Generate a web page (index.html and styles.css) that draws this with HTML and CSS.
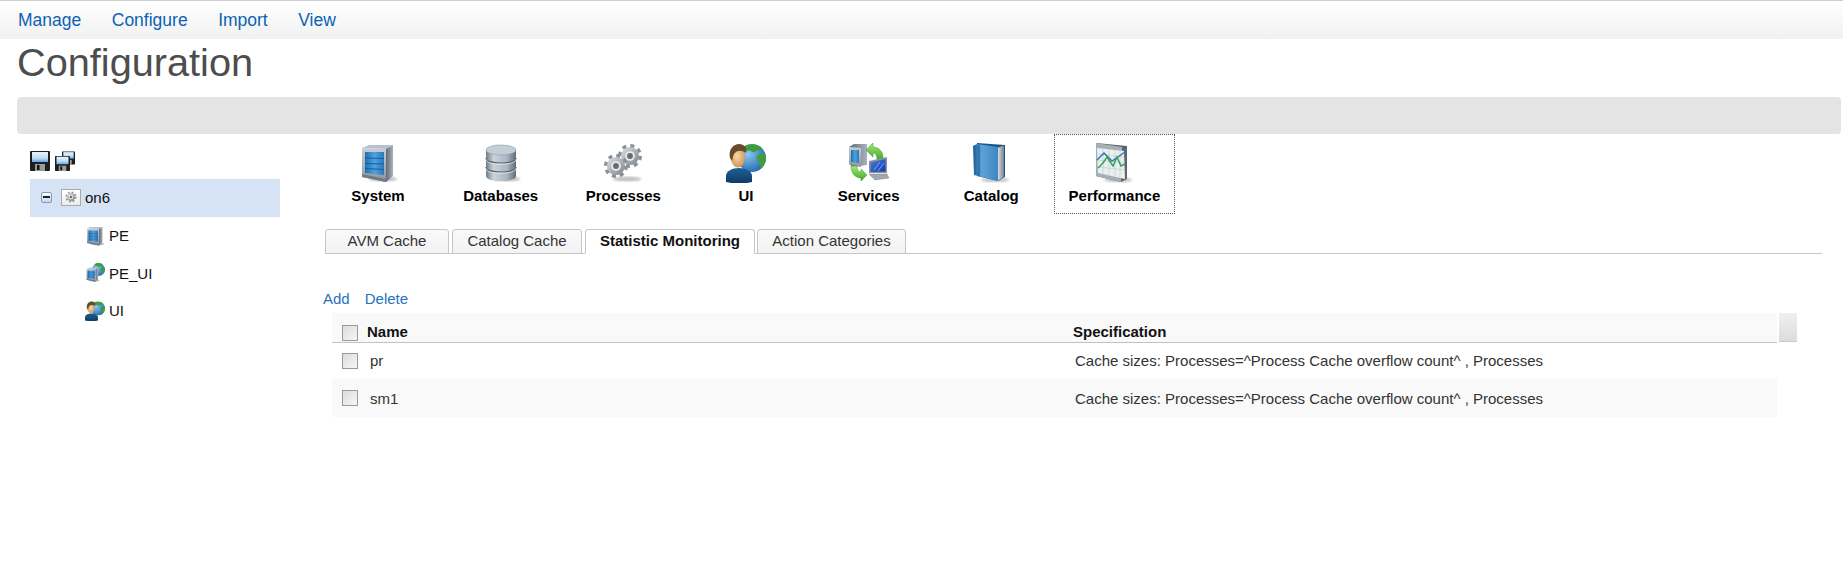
FILE: index.html
```html
<!DOCTYPE html>
<html lang="en">
<head>
<meta charset="utf-8">
<title>Configuration</title>
<link rel="stylesheet" href="styles.css">
</head>
<body>
<svg class="defs" width="0" height="0" aria-hidden="true">
  <defs>
    <linearGradient id="gBlue" x1="0" y1="0" x2="1" y2="0"><stop offset="0" stop-color="#1f6fb5"/><stop offset=".5" stop-color="#4ba3e0"/><stop offset="1" stop-color="#2a78ba"/></linearGradient>
    <linearGradient id="gFrame" x1="0" y1="0" x2="0" y2="1"><stop offset="0" stop-color="#c7ced6"/><stop offset="1" stop-color="#8d959d"/></linearGradient>
    <linearGradient id="gSide" x1="0" y1="0" x2="1" y2="0"><stop offset="0" stop-color="#5f6a78"/><stop offset="1" stop-color="#aab2bc"/></linearGradient>
    <linearGradient id="gDb" x1="0" y1="0" x2="1" y2="0"><stop offset="0" stop-color="#6f7d88"/><stop offset=".25" stop-color="#c9d3da"/><stop offset=".7" stop-color="#a9b6c0"/><stop offset="1" stop-color="#5f6d78"/></linearGradient>
    <linearGradient id="gGear" x1="0" y1="0" x2="1" y2="1"><stop offset="0" stop-color="#dfe2e5"/><stop offset="1" stop-color="#7d8389"/></linearGradient>
    <radialGradient id="gGlobe" cx=".35" cy=".35" r=".8"><stop offset="0" stop-color="#8cc8f2"/><stop offset="1" stop-color="#145fa8"/></radialGradient>
    <radialGradient id="gSkin" cx=".45" cy=".4" r=".7"><stop offset="0" stop-color="#fbd9a6"/><stop offset="1" stop-color="#c98b4e"/></radialGradient>
    <linearGradient id="gBody" x1="0" y1="0" x2="0" y2="1"><stop offset="0" stop-color="#1f5f94"/><stop offset="1" stop-color="#0d3a63"/></linearGradient>
    <linearGradient id="gBook" x1="0" y1="0" x2="1" y2="0"><stop offset="0" stop-color="#1d5f96"/><stop offset=".15" stop-color="#2c77b3"/><stop offset=".35" stop-color="#5fa3d6"/><stop offset="1" stop-color="#3f86c0"/></linearGradient>
    <linearGradient id="gPages" x1="0" y1="0" x2="1" y2="0"><stop offset="0" stop-color="#e8ecef"/><stop offset="1" stop-color="#77818a"/></linearGradient>
    <linearGradient id="gScreen" x1="0" y1="0" x2="1" y2="1"><stop offset="0" stop-color="#4a7fe0"/><stop offset="1" stop-color="#1538a8"/></linearGradient>
    <linearGradient id="gArrow" x1="0" y1="0" x2="0" y2="1"><stop offset="0" stop-color="#a5e878"/><stop offset="1" stop-color="#3fa82c"/></linearGradient>
    <linearGradient id="gDisk" x1="0" y1="0" x2="0" y2="1"><stop offset="0" stop-color="#e8f2fb"/><stop offset=".6" stop-color="#c0dcf4"/><stop offset="1" stop-color="#5fa6e4"/></linearGradient>
    <filter id="blur"><feGaussianBlur stdDeviation="1.2"/></filter>

    <symbol id="server" viewBox="0 0 40 40">
      <ellipse cx="25" cy="36" rx="14" ry="2.5" fill="#777" opacity=".45" filter="url(#blur)"/>
      <polygon points="4,5 11,2 35,2 28,6" fill="#b9c2cc"/>
      <polygon points="28,6 35,2 35,33 28,39" fill="url(#gSide)"/>
      <polygon points="4,5 28,6 28,39 4,34" fill="url(#gFrame)"/>
      <polygon points="7,9 26,9 26,32 7,30" fill="url(#gBlue)"/>
      <path d="M7 15 26 15.500M7 20.500 26 21M7 25.500 26 26.500" stroke="#16588f" stroke-width=".9" fill="none"/>
      <polygon points="4,34 28,39 28,36 4,31" fill="#727a83"/>
    </symbol>

    <symbol id="db" viewBox="0 0 40 40">
      <ellipse cx="26" cy="36" rx="13" ry="2.5" fill="#777" opacity=".45" filter="url(#blur)"/>
      <path d="M5 7V33C5 36 11 38 20 38S35 36 35 33V7Z" fill="url(#gDb)"/>
      <ellipse cx="20" cy="7" rx="15" ry="5" fill="#c4ced6" stroke="#8b97a2" stroke-width=".6"/>
      <path d="M5 15C5 18 11 20 20 20S35 18 35 15M5 24C5 27 11 29 20 29S35 27 35 24" fill="none" stroke="#56626d" stroke-width="1.2"/>
      <path d="M5 16.200C5 19.200 11 21.200 20 21.200S35 19.200 35 16.200M5 25.200C5 28.200 11 30.200 20 30.200S35 28.200 35 25.200" fill="none" stroke="#e6ecf0" stroke-width=".8"/>
    </symbol>

    <symbol id="gear1" viewBox="0 0 40 40">
      <circle cx="20" cy="20" r="15" fill="none" stroke="#8b9197" stroke-width="7" stroke-dasharray="5.890 5.890"/>
      <circle cx="20" cy="20" r="14" fill="url(#gGear)"/>
      <circle cx="20" cy="20" r="7.500" fill="#e8eaec"/>
      <circle cx="20" cy="20" r="4.500" fill="#666c72"/>
    </symbol>

    <symbol id="gears" viewBox="0 0 40 40">
      <ellipse cx="24" cy="36" rx="14" ry="2.5" fill="#777" opacity=".45" filter="url(#blur)"/>
      <use href="#gear1" x="14" y="0" width="26" height="26"/>
      <use href="#gear1" x="0" y="10" width="26" height="26"/>
    </symbol>

    <symbol id="globe" viewBox="0 0 40 40">
      <circle cx="20" cy="20" r="20" fill="url(#gGlobe)"/>
      <path d="M8 4C14 -1 26 -1 32 4 35 8 30 11 27 9 24 13 19 12 17 9 14 11 9 9 8 4Z" fill="#3f9e3a"/>
      <path d="M30 15C34 13 38 13 39.500 16 40.500 24 38 31 33 35 30 31 31 26 28 23 25 21 26 17 30 15Z" fill="#3f9e3a"/>
    </symbol>

    <symbol id="person" viewBox="0 0 40 40">
      <path d="M0 39V33C0 28 6 25 13 25S26 28 26 33V39C18 41 8 41 0 39Z" fill="url(#gBody)"/>
      <ellipse cx="12" cy="15" rx="7" ry="9.500" fill="url(#gSkin)"/>
      <path d="M4 15C2 6 8 1 13 1S22 5 20 10C16 7 11 7 9 10 7 11 7 15 6 18Z" fill="#6b4a2c"/>
    </symbol>

    <symbol id="ui" viewBox="0 0 40 40">
      <use href="#globe" x="12" y="1" width="28" height="28"/>
      <use href="#person"/>
    </symbol>

    <symbol id="peui" viewBox="0 0 40 40">
      <use href="#globe" x="14" y="0" width="26" height="26"/>
      <use href="#server" x="0" y="8" width="30" height="30"/>
    </symbol>

    <symbol id="services" viewBox="0 0 40 40">
      <polygon points="0,4 5,1 18,1 18,22 4,24 0,21" fill="url(#gSide)"/>
      <polygon points="0,4 12,5 12,24 0,21" fill="url(#gFrame)"/>
      <polygon points="2,7 10,7 10,20 2,19" fill="url(#gBlue)"/>
      <path d="M17 7 24 0V4C30 4 35 9 34 17H28C28 13 27 10 24 10V14Z" fill="url(#gArrow)" stroke="#3b9a2b" stroke-width=".5"/>
      <path d="M2 23H8C8 27 10 29 12 29V26L18 32 12 38V35C6 35 2 30 2 23Z" fill="url(#gArrow)" stroke="#3b9a2b" stroke-width=".5"/>
      <polygon points="20,18 38,14 38,30 20,30" fill="#8b939b"/>
      <polygon points="21.500,19.500 36.500,16 36.500,28.500 21.500,29" fill="url(#gScreen)"/>
      <path d="M25 27 31 19M29 28 35 20" stroke="#7ba6f0" stroke-width="1"/>
      <polygon points="20,31 38,31 40,35 26,37" fill="#a2a9b0" stroke="#6e757c" stroke-width=".4"/>
    </symbol>

    <symbol id="book" viewBox="0 0 40 40">
      <ellipse cx="24" cy="37" rx="14" ry="2" fill="#777" opacity=".45" filter="url(#blur)"/>
      <polygon points="6,0 34,2 34,34 27,38 6,33" fill="#1c5485"/>
      <polygon points="26,5 33,2.500 33,34 26,38" fill="url(#gPages)"/>
      <polygon points="2,3 6,1 27,4 27,38 3,32" fill="url(#gBook)"/>
      <path d="M8 3V33" stroke="#174f80" stroke-width="1" opacity=".7"/>
    </symbol>

    <symbol id="perf" viewBox="0 0 40 40">
      <ellipse cx="24" cy="37" rx="14" ry="2" fill="#777" opacity=".45" filter="url(#blur)"/>
      <polygon points="2,0 33,3 33,36 27,39 2,33" fill="#5b6670"/>
      <polygon points="2,0 28,4 27,39 2,33" fill="#a7aeb4"/>
      <polygon points="3,5 30,8 31,36 4,30" fill="#e9f1f0"/>
      <path d="M9 6V31M15 6V32M21 7V33M26 7V35M3 11 30 14M3 17 30 20M4 24 31 27" stroke="#b9c6c9" stroke-width=".6"/>
      <path d="M3 17 10 10 18 18 31 9" fill="none" stroke="#2f74c6" stroke-width="1.500"/>
      <path d="M4 25 9 20 13 14 19 23 23 14 27 23 31 21" fill="none" stroke="#3aa24a" stroke-width="1.500"/>
    </symbol>

    <symbol id="disk" viewBox="0 0 20 20">
      <path d="M1 0H19A1 1 0 0 1 20 1V19A1 1 0 0 1 19 20H1A1 1 0 0 1 0 19V1A1 1 0 0 1 1 0Z" fill="#1f1f1f"/>
      <rect x="2" y="1" width="16" height="10" fill="url(#gDisk)"/>
      <rect x="5" y="13" width="10" height="7" fill="#9a9a9a"/>
      <rect x="7" y="14" width="2.500" height="5" fill="#111"/>
    </symbol>
  </defs>
</svg>

<nav class="topbar">
  <a class="nav-link" href="#">Manage</a>
  <a class="nav-link" href="#">Configure</a>
  <a class="nav-link" href="#">Import</a>
  <a class="nav-link" href="#">View</a>
</nav>

<h1 class="page-title">Configuration</h1>
<div class="message-bar"></div>

<div class="layout">
  <aside class="sidebar">
    <div class="save-icons">
      <svg class="save-one"><use href="#disk"/></svg>
      <span class="save-all">
        <svg class="save-back"><use href="#disk"/></svg>
        <svg class="save-front"><use href="#disk"/></svg>
      </span>
    </div>
    <div class="tree-root">
      <span class="tree-toggle"><span class="tree-minus"></span></span>
      <span class="tree-box">
        <svg class="tree-gear"><use href="#gear1"/></svg>
      </span>
      <span>on6</span>
    </div>
    <div class="tree-item"><svg class="tree-icon"><use href="#server"/></svg><span>PE</span></div>
    <div class="tree-item"><svg class="tree-icon"><use href="#peui"/></svg><span>PE_UI</span></div>
    <div class="tree-item"><svg class="tree-icon"><use href="#ui"/></svg><span>UI</span></div>
  </aside>

  <main class="content">
    <div class="tools">
      <div class="tool"><svg class="tool-icon"><use href="#server"/></svg><span>System</span></div>
      <div class="tool"><svg class="tool-icon"><use href="#db"/></svg><span>Databases</span></div>
      <div class="tool"><svg class="tool-icon"><use href="#gears"/></svg><span>Processes</span></div>
      <div class="tool"><svg class="tool-icon"><use href="#ui"/></svg><span>UI</span></div>
      <div class="tool"><svg class="tool-icon"><use href="#services"/></svg><span>Services</span></div>
      <div class="tool"><svg class="tool-icon"><use href="#book"/></svg><span>Catalog</span></div>
      <div class="tool tool-active"><svg class="tool-icon"><use href="#perf"/></svg><span>Performance</span></div>
    </div>

    <div class="tabs">
      <div class="tab tab-avm">AVM Cache</div>
      <div class="tab tab-cat">Catalog Cache</div>
      <div class="tab tab-stat tab-active">Statistic Monitoring</div>
      <div class="tab tab-act">Action Categories</div>
    </div>

    <div class="actions">
      <a class="action" href="#">Add</a>
      <a class="action" href="#">Delete</a>
    </div>

    <div class="grid-wrap">
      <table class="grid">
        <colgroup><col class="col-check"><col class="col-name"><col></colgroup>
        <thead>
          <tr>
            <th><span class="check"></span></th>
            <th class="name-head">Name</th>
            <th class="spec-head">Specification</th>
          </tr>
        </thead>
        <tbody>
          <tr class="row-first">
            <td><span class="check"></span></td>
            <td>pr</td>
            <td class="spec-cell">Cache sizes: Processes=^Process Cache overflow count^ , Processes</td>
          </tr>
          <tr class="alt">
            <td><span class="check"></span></td>
            <td>sm1</td>
            <td class="spec-cell">Cache sizes: Processes=^Process Cache overflow count^ , Processes</td>
          </tr>
        </tbody>
      </table>
      <div class="scroll-head"></div>
    </div>
  </main>
</div>
</body>
</html>
```

FILE: styles.css
```css
* { box-sizing: border-box; }
html, body { margin: 0; padding: 0; background: #fff; }
body {
  width: 1843px;
  height: 578px;
  overflow: hidden;
  font-family: "Liberation Sans", Arial, sans-serif;
  font-size: 14px;
  color: #222;
}
.defs { position: absolute; }

.topbar {
  height: 39px;
  border-top: 1px solid #cfcfcf;
  background: linear-gradient(#fff, #f1f1f1);
  display: flex;
  align-items: center;
  gap: 30.500px;
  padding-left: 18px;
}
.nav-link { color: #0a62b5; font-size: 17.500px; text-decoration: none; }

.page-title {
  margin: 0;
  height: 58px;
  padding: 1px 0 0 17px;
  font-size: 39.700px;
  line-height: 44px;
  font-weight: 400;
  color: #4d4d4d;
}
.message-bar {
  margin: 0 2px 0 17px;
  height: 37px;
  background: #e4e4e4;
  border-radius: 4px;
}

.layout { display: flex; }
.sidebar { width: 318px; padding: 17px 0 0 30px; flex: none; }
.save-icons { display: flex; gap: 5px; height: 28px; }
.save-one { width: 20px; height: 20px; }
.save-all { position: relative; width: 20px; height: 20px; }
.save-back, .save-front { position: absolute; }
.save-back { right: 0; top: 0; width: 13px; height: 14px; }
.save-front { left: 0; bottom: 0; width: 15px; height: 15px; }

.tree-root {
  width: 250px;
  height: 38px;
  background: #d6e3f5;
  display: flex;
  align-items: center;
  padding: 0 0 2px 11px;
  font-size: 15px;
  color: #111;
}
.tree-toggle {
  width: 11px;
  height: 11px;
  border: 1px solid #7f9db9;
  border-radius: 2px;
  background: linear-gradient(#fff, #c4d6ec);
  display: flex;
  align-items: center;
  justify-content: center;
  margin-right: 9px;
}
.tree-minus { width: 7px; height: 2px; background: #222; }
.tree-box {
  width: 20px;
  height: 17px;
  border: 1px solid #a9a9a9;
  background: linear-gradient(#fff, #ececec);
  display: flex;
  align-items: center;
  justify-content: center;
  margin-right: 4px;
}
.tree-gear { width: 12px; height: 12px; }
.tree-item {
  height: 37.500px;
  display: flex;
  align-items: center;
  gap: 4px;
  padding-left: 55px;
  font-size: 15px;
  color: #111;
}
.tree-icon { width: 20px; height: 20px; flex: none; }

.content { flex: 1; min-width: 0; }
.tools { display: flex; gap: 2.670px; height: 80px; }
.tool {
  width: 120px;
  height: 80px;
  display: flex;
  flex-direction: column;
  align-items: center;
  padding-top: 9px;
  font-weight: 700;
  font-size: 15px;
  color: #000;
}
.tool-icon { width: 40px; height: 40px; margin-bottom: 4px; }
.tool-active { width: 121px; border: 1px dotted #555; padding-top: 8px; }

.tabs {
  margin: 15px 21px 0 7px;
  height: 25px;
  display: flex;
  border-bottom: 1px solid #c6c6c6;
}
.tab {
  height: 25px;
  padding-bottom: 2px;
  border: 1px solid #c6c6c6;
  border-radius: 3px 3px 0 0;
  background: linear-gradient(#f9f9f9, #f3f3f3);
  display: flex;
  align-items: center;
  justify-content: center;
  font-size: 15px;
  color: #333;
  margin-right: 3px;
}
.tab-avm { width: 124px; }
.tab-cat { width: 130px; }
.tab-stat { width: 170px; margin-right: 2px; }
.tab-act { width: 149px; }
.tab-active { background: #fff; border-bottom-color: #fff; font-weight: 700; color: #111; }

.actions { display: flex; gap: 15px; margin: 36px 0 0 5px; height: 23px; align-items: flex-start; }
.action { color: #1f72bf; font-size: 15px; text-decoration: none; }

.grid-wrap { display: flex; gap: 2px; margin-left: 14px; align-items: flex-start; }
.grid { width: 1445px; border-collapse: collapse; table-layout: fixed; font-size: 15px; color: #333; }
.col-check { width: 35px; }
.col-name { width: 706px; }
.grid th {
  height: 29px;
  background: #f9f9f9;
  border-bottom: 1px solid #bcc1cb;
  text-align: left;
  font-weight: 700;
  color: #111;
  padding: 0 0 2px;
  vertical-align: bottom;
  line-height: 17px;
}
.grid td { height: 38px; padding: 0 0 0 3px; vertical-align: middle; }
.grid .row-first td { height: 37px; }
.grid td:first-child, .grid th:first-child { padding: 0 0 0 10px; }
.grid th:first-child { padding-bottom: 1px; }
.grid td.spec-cell { padding-left: 2px; }
.grid .alt td { background: #f9f9f9; }
.check {
  display: block;
  width: 16px;
  height: 16px;
  border: 1px solid #9a9a9a;
  background: linear-gradient(135deg, #dcdcdc, #f6f6f6);
}
.scroll-head {
  width: 18px;
  height: 29px;
  background: linear-gradient(#f0f0f0, #dcdcdc);
  border-bottom: 1px solid #c4c8cf;
}
```
